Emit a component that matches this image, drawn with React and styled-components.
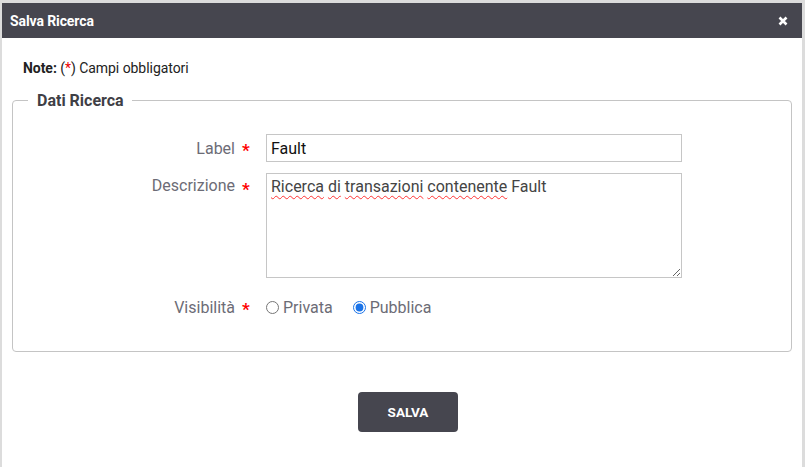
import React, { useState } from 'react'
import styled, { createGlobalStyle } from 'styled-components'

const Global = createGlobalStyle`
  html, body { margin: 0; padding: 0; background: #dcdcdc; }
  body { font-family: Roboto, "Liberation Sans", sans-serif; overflow: hidden; }
  * { box-sizing: border-box; }
`

const Page = styled.div`
  padding: 3px 3px 0 2px;
  height: 467px;
`

const Dialog = styled.div`
  background: #fff;
  height: 100%;
  display: flex;
  flex-direction: column;
`

const Header = styled.div`
  height: 35px;
  background: #46464f;
  color: #fff;
  display: flex;
  align-items: center;
  justify-content: space-between;
  padding: 0 14px 0 8px;
`

const Title = styled.h4`
  margin: 0;
  font-size: 14px;
  font-weight: 700;
  letter-spacing: -0.1px;
`

const Close = styled.button`
  border: 0;
  background: none;
  padding: 0;
  display: flex;
  cursor: pointer;
`

const Body = styled.div`
  padding: 22px 10px 0 10px;
`

const Note = styled.p`
  margin: 0 0 0 11px;
  font-size: 14px;
  color: #222;
  letter-spacing: -0.05px;
  b { font-weight: 700; }
  span { color: #e00; }
`

const Fieldset = styled.fieldset`
  margin: 15px 0 0 0;
  border: 1px solid #c4c4c4;
  border-radius: 4px;
  padding: 24px 0 33px 0;
`

const Legend = styled.legend`
  margin-left: 15px;
  padding: 0 8px 0 9px;
  font-size: 16px;
  font-weight: 700;
  color: #3f3f46;
`

const Row = styled.div`
  display: grid;
  grid-template-columns: 222px 31px 416px;
  align-items: ${p => (p.top ? 'start' : 'center')};
  margin-top: ${p => p.gap || 0}px;
`

const Label = styled.label`
  text-align: right;
  font-size: 16px;
  color: #6c6c76;
  padding-top: ${p => p.pt || 0}px;
`

const Star = styled.span`
  color: #f00;
  font-size: 17px;
  font-weight: 700;
  padding: ${p => p.pt || 0}px 0 0 7px;
  line-height: 1;
`

const Field = styled.input`
  width: 416px;
  height: 28px;
  border: 1px solid #c6c6c6;
  padding: 0 4px;
  font-family: Roboto, "Liberation Sans", sans-serif;
  font-size: 16px;
  color: #111;
  outline: none;
`

const Area = styled.div`
  width: 416px;
  height: 105px;
  border: 1px solid #c6c6c6;
  padding: 3px 4px;
  font-size: 16px;
  line-height: 20px;
  color: #444;
  outline: none;
  overflow: auto;
  resize: vertical;
`

const Typo = styled.span`
  text-decoration: underline wavy #f33;
  text-decoration-skip-ink: none;
  text-underline-offset: 3px;
  text-decoration-thickness: 1px;
`

const Radios = styled.div`
  display: flex;
  align-items: center;
  gap: 20px;
`

const Choice = styled.label`
  display: flex;
  align-items: center;
  gap: 4px;
  font-size: 16px;
  color: #6c6c76;
  input {
    margin: 0;
    width: 13px;
    height: 13px;
    accent-color: #1a73e8;
  }
`

const Actions = styled.div`
  padding: 40px 0 0 346px;
`

const Save = styled.button`
  width: 100px;
  height: 40px;
  border: 0;
  border-radius: 4px;
  background: #46464f;
  color: #fff;
  font-family: Roboto, "Liberation Sans", sans-serif;
  font-size: 13.5px;
  font-weight: 700;
`

export default function App() {
  const [vis, setVis] = useState('pubblica')
  return (
    <Page>
      <Global />
      <Dialog>
        <Header>
          <Title>Salva Ricerca</Title>
          <Close aria-label="close">
            <svg width="10" height="10" viewBox="0 0 10 10">
              <path d="M1.5 1.5 L8.5 8.5 M8.5 1.5 L1.5 8.5" stroke="#fff" strokeWidth="2.6" />
            </svg>
          </Close>
        </Header>
        <Body>
          <Note><b>Note:</b> (<span>*</span>) Campi obbligatori</Note>
          <Fieldset>
            <Legend>Dati Ricerca</Legend>
            <Row>
              <Label>Label</Label>
              <Star pt={4}>*</Star>
              <Field defaultValue="Fault" />
            </Row>
            <Row top gap={11}>
              <Label pt={3}>Descrizione</Label>
              <Star pt={8}>*</Star>
              <Area role="textbox" contentEditable suppressContentEditableWarning>
                <Typo>Ricerca</Typo> <Typo>di</Typo> <Typo>transazioni</Typo> <Typo>contenente</Typo> Fault
              </Area>
            </Row>
            <Row gap={19}>
              <Label>Visibilità</Label>
              <Star pt={4}>*</Star>
              <Radios>
                <Choice>
                  <input type="radio" name="vis" checked={vis === 'privata'} onChange={() => setVis('privata')} />
                  Privata
                </Choice>
                <Choice>
                  <input type="radio" name="vis" checked={vis === 'pubblica'} onChange={() => setVis('pubblica')} />
                  Pubblica
                </Choice>
              </Radios>
            </Row>
          </Fieldset>
          <Actions>
            <Save>SALVA</Save>
          </Actions>
        </Body>
      </Dialog>
    </Page>
  )
}
